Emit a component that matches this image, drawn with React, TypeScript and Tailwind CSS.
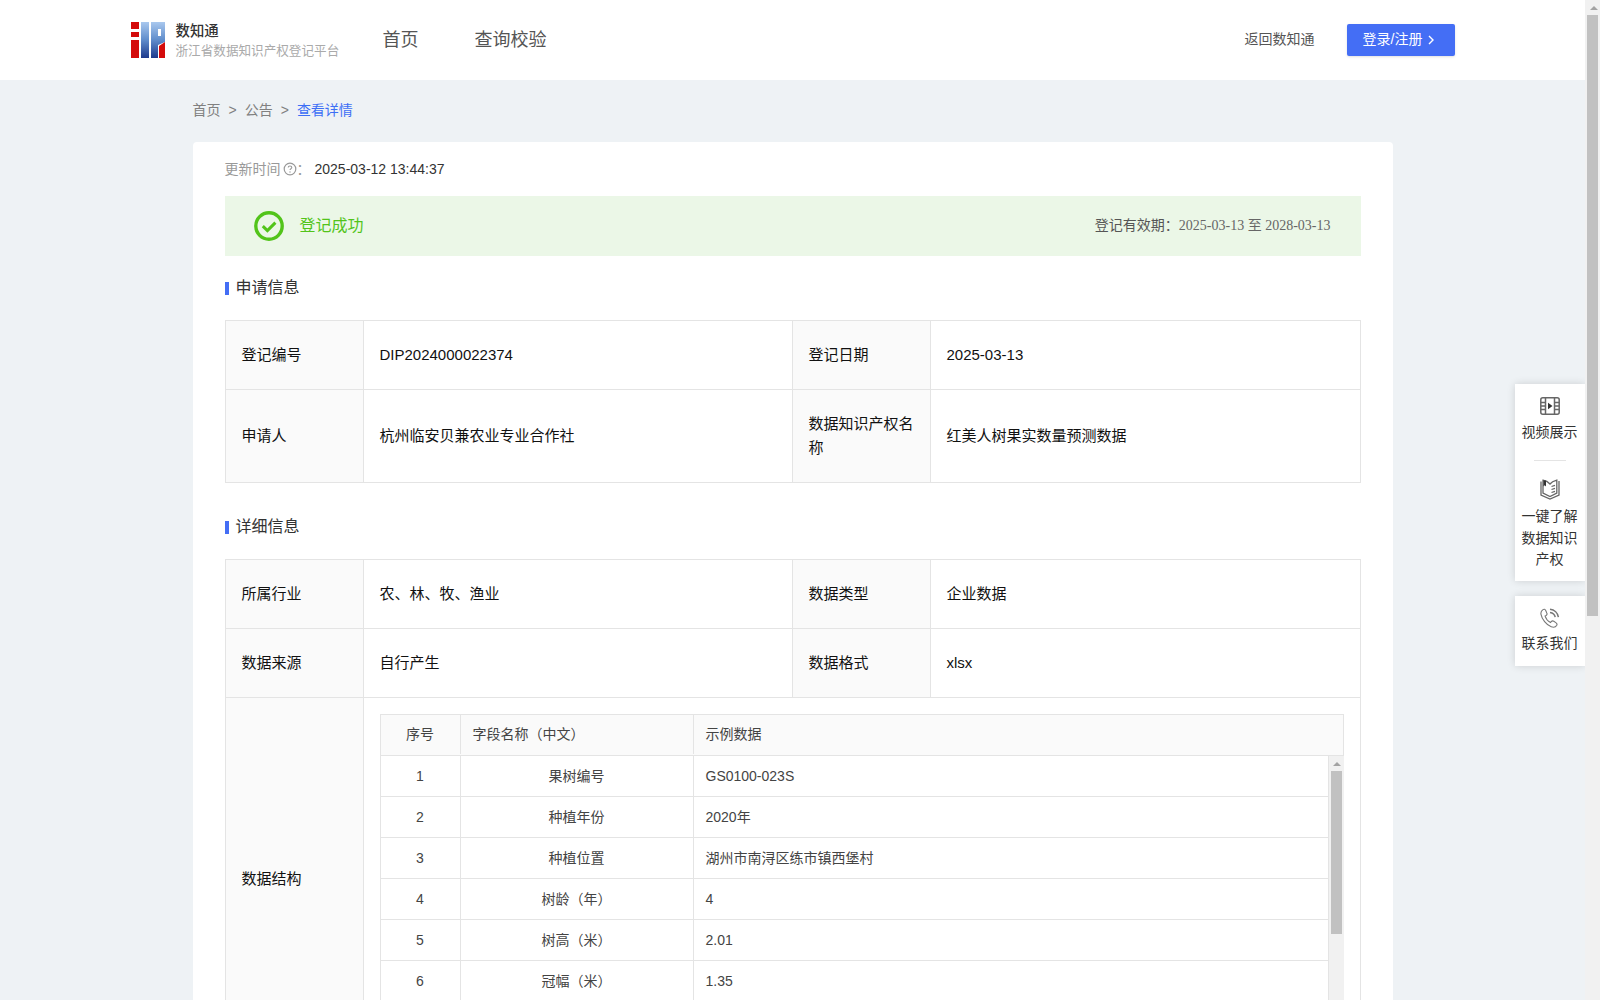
const basicRows = [
  { a: "登记编号", b: "DIP2024000022374", c: "登记日期", d: "2025-03-13", h: "h-[69px]" },
  { a: "申请人", b: "杭州临安贝兼农业专业合作社", c: "数据知识产权名称", d: "红美人树果实数量预测数据", h: "h-[93px]" },
];

const fieldRows = [
  ["1", "果树编号", "GS0100-023S"],
  ["2", "种植年份", "2020年"],
  ["3", "种植位置", "湖州市南浔区练市镇西堡村"],
  ["4", "树龄（年）", "4"],
  ["5", "树高（米）", "2.01"],
  ["6", "冠幅（米）", "1.35"],
];

function Logo() {
  return (
    <svg width="35" height="36" viewBox="0 0 35 36" className="shrink-0">
      <defs>
        <linearGradient id="logoBlue" x1="0" y1="0" x2="0" y2="1">
          <stop offset="0" stopColor="#a9c8ee" />
          <stop offset="0.5" stopColor="#5f8ccb" />
          <stop offset="1" stopColor="#1d3a8c" />
        </linearGradient>
      </defs>
      <rect x="0" y="0" width="8" height="7" fill="#d40b0b" />
      <rect x="0" y="10" width="8" height="5" fill="#d40b0b" />
      <rect x="0" y="18" width="8" height="18" fill="#d40b0b" />
      <rect x="10" y="0" width="8" height="36" fill="url(#logoBlue)" />
      <path d="M20 0H34V20L27 23V36H20Z" fill="url(#logoBlue)" />
      <rect x="27" y="7" width="3" height="7" fill="#ffffff" />
      <path d="M28 24L34 20V36H28Z" fill="#d40b0b" />
    </svg>
  );
}

function ScrollBar({ thumbHeight }: { thumbHeight: string }) {
  return (
    <div className="flex w-[15px] shrink-0 flex-col bg-[#f1f1f1]">
      <div className="flex h-[15px] items-center justify-center pl-[2px]">
        <div className="h-0 w-0 border-x-[4px] border-b-[4px] border-x-transparent border-b-[#a3a3a3]" />
      </div>
      <div className={`ml-[2px] w-[11px] bg-[#c1c1c1] ${thumbHeight}`} />
    </div>
  );
}

function SectionTitle({ children, className }: { children: React.ReactNode; className: string }) {
  return (
    <div className={`flex h-[22px] items-center gap-[7px] text-[16px] text-[#333] ${className}`}>
      <span className="h-[13px] w-[4px] bg-[#446ef5]" />
      {children}
    </div>
  );
}

function FieldTable() {
  return (
    <div className="border-l border-r border-t border-[#e4e4e4] text-[14px] text-[#444]">
      <div className="flex h-[41px] items-center border-b border-[#e4e4e4] bg-[#fafafa] pb-[1px]">
        <div className="flex h-full w-[80px] items-center justify-center border-r border-[#e4e4e4]">序号</div>
        <div className="flex h-full w-[233px] items-center border-r border-[#e4e4e4] pl-3">字段名称（中文）</div>
        <div className="pl-3">示例数据</div>
      </div>
      <div className="-mr-px flex h-[287px]">
        <div className="min-w-0 flex-1 border-r border-[#e4e4e4]">
          {fieldRows.map((row) => (
            <div key={row[0]} className="flex h-[41px] items-center border-b border-[#e4e4e4]">
              <div className="flex h-full w-[80px] items-center justify-center border-r border-[#e4e4e4]">{row[0]}</div>
              <div className="flex h-full w-[233px] items-center justify-center border-r border-[#e4e4e4]">{row[1]}</div>
              <div className="pl-3">{row[2]}</div>
            </div>
          ))}
        </div>
        <ScrollBar thumbHeight="h-[163px]" />
      </div>
    </div>
  );
}

export default function App() {
  const label = "border border-[#e4e4e4] bg-[#fafafa] px-4 text-[15px] leading-[24px] text-[#111]";
  const value = "border border-[#e4e4e4] px-4 text-[15px] leading-[24px] text-[#111]";

  return (
    <div className="flex h-screen w-full overflow-hidden [font-family:'Liberation_Sans','Noto_Sans_CJK_SC',sans-serif]">
      <div className="relative min-w-0 flex-1 overflow-hidden bg-[#eef2f5]">
        <header className="flex h-20 items-center justify-center bg-white">
          <div className="flex w-[1324px] items-center">
            <Logo />
            <div className="ml-[10px] w-[199px]">
              <div className="text-[14.4px] font-medium leading-[20px] text-[#333]">数知通</div>
              <div className="mt-[1px] text-[12.6px] leading-[18px] text-[#aaa]">浙江省数据知识产权登记平台</div>
            </div>
            <nav className="ml-[8px] flex gap-[56px] text-[18px] text-[#555]">
              <span>首页</span>
              <span>查询校验</span>
            </nav>
            <div className="ml-auto flex items-center gap-[32px]">
              <span className="-mt-[1px] text-[14px] text-[#555]">返回数知通</span>
              <button
                type="button"
                className="flex h-[32px] w-[108px] items-center justify-center gap-[6px] rounded-[2px] bg-[#446ef5] pb-[1px] pr-[3px] text-[14px] text-white shadow-sm"
              >
                登录/注册
                <svg width="7" height="10" viewBox="0 0 7 10" fill="none" stroke="currentColor" strokeWidth="1.4">
                  <path d="M1 1l4 4-4 4" />
                </svg>
              </button>
            </div>
          </div>
        </header>

        <main className="mx-auto w-[1200px]">
          <div className="flex h-[62px] items-start gap-[8px] pt-[20px] text-[14px] leading-[20px] text-[#808080]">
            <span>首页</span>
            <span>&gt;</span>
            <span>公告</span>
            <span>&gt;</span>
            <span className="text-[#3d6ff5]">查看详情</span>
          </div>

          <section className="rounded-t-[4px] bg-white px-8 pt-4">
            <div className="flex h-[22px] items-center text-[14px]">
              <span className="text-[#999]">更新时间</span>
              <svg width="14" height="14" viewBox="0 0 14 14" fill="none" className="ml-[2px] text-[#999]">
                <circle cx="7" cy="7" r="5.8" stroke="currentColor" strokeWidth="1.2" />
                <path d="M5.2 5.6c0-1 .8-1.6 1.8-1.6s1.8.6 1.8 1.5c0 1.2-1.8 1.3-1.8 2.6" stroke="currentColor" strokeWidth="1.1" />
                <circle cx="7" cy="10" r=".7" fill="currentColor" />
              </svg>
              <span className="w-[18px] text-[#999]">：</span>
              <span className="text-[#333]">2025-03-12 13:44:37</span>
            </div>

            <div className="mt-4 flex h-[60px] items-center bg-[#ebf7e7] pl-[29px] pr-[30px]">
              <svg width="30" height="30" viewBox="0 0 30 30" fill="none" stroke="#52c41a">
                <circle cx="15" cy="15" r="13.2" strokeWidth="3.4" />
                <path d="M8.8 15.2l4.6 4.4 8-8" strokeWidth="3" />
              </svg>
              <span className="ml-[16px] pb-[1px] text-[16px] text-[#52c41a]">登记成功</span>
              <span className="ml-auto pb-[2px] text-[14px] text-[#555]">
                登记有效期：
                <span className="[font-family:'Liberation_Serif','Noto_Sans_CJK_SC',serif] text-[#666]">
                  2025-03-13 至 2028-03-13
                </span>
              </span>
            </div>

            <SectionTitle className="mt-[21px]">申请信息</SectionTitle>
            <table className="mt-[21px] w-full table-fixed border-collapse">
              <colgroup>
                <col className="w-[138px]" />
                <col className="w-[429px]" />
                <col className="w-[138px]" />
                <col />
              </colgroup>
              <tbody>
                {basicRows.map((row) => (
                  <tr key={row.a} className={row.h}>
                    <td className={label}>{row.a}</td>
                    <td className={value}>{row.b}</td>
                    <td className={label}>{row.c}</td>
                    <td className={value}>{row.d}</td>
                  </tr>
                ))}
              </tbody>
            </table>

            <SectionTitle className="mt-[33px]">详细信息</SectionTitle>
            <table className="mt-[21px] w-full table-fixed border-collapse">
              <colgroup>
                <col className="w-[138px]" />
                <col className="w-[429px]" />
                <col className="w-[138px]" />
                <col />
              </colgroup>
              <tbody>
                <tr className="h-[69px]">
                  <td className={label}>所属行业</td>
                  <td className={value}>农、林、牧、渔业</td>
                  <td className={label}>数据类型</td>
                  <td className={value}>企业数据</td>
                </tr>
                <tr className="h-[69px]">
                  <td className={label}>数据来源</td>
                  <td className={value}>自行产生</td>
                  <td className={label}>数据格式</td>
                  <td className={value}>xlsx</td>
                </tr>
                <tr>
                  <td className={label}>数据结构</td>
                  <td colSpan={3} className="border border-[#e4e4e4] p-4">
                    <FieldTable />
                  </td>
                </tr>
              </tbody>
            </table>
          </section>
        </main>

        {/* floating side tools */}
        <aside className="absolute right-0 top-[384px] flex w-[70px] flex-col gap-[15px] text-center text-[14px] text-[#333]">
          <div className="bg-white pt-[13px] shadow-[0_0_8px_rgba(0,0,0,0.14)]">
            <svg width="20" height="18" viewBox="0 0 20 18" fill="none" stroke="#666" strokeWidth="1.5" className="mx-auto">
              <rect x=".8" y=".8" width="18.4" height="16.4" rx="2" />
              <path d="M5.5 1v16M14.5 1v16M1 5.5h4.5M1 9h4.5M1 12.5h4.5M14.5 5.5H19M14.5 9H19M14.5 12.5H19" />
              <path d="M8 5.8l4.5 3.2L8 12.2Z" fill="#333" stroke="none" />
            </svg>
            <div className="mt-[6px] pr-[1px] leading-[22px]">视频展示</div>
            <div className="mx-auto mt-[17px] h-px w-[32px] bg-[#e4e4e4]" />
            <svg width="20" height="21" viewBox="0 0 20 21" fill="none" stroke="#666" strokeWidth="1.3" className="mx-auto mt-[18px]">
              <path d="M1 2.5V16l9 4 9-4V2" />
              <path d="M10 5C8 2.8 5.5 1.6 3 1.2V14l7 3.5 6.8-3.5V1.2C14 2 11.6 3 10 5Z" />
              <path d="M3.4 1.5h2.6v6L4.7 6.2 3.4 7.5Z" fill="#333" stroke="none" />
              <path d="M11.5 7.5l3.5-1.2M11.5 10.5l3.5-1.2M11.5 13.5l3.5-1.2" />
            </svg>
            <div className="mt-[6px] pb-[10px] pl-[6px] pr-[7px] leading-[21.5px]">一键了解数据知识产权</div>
          </div>
          <div className="h-[70px] bg-white pt-[12px] shadow-[0_0_8px_rgba(0,0,0,0.14)]">
            <svg width="20" height="20" viewBox="0 0 20 20" fill="none" stroke="#777" strokeWidth="1.1" className="mx-auto">
              <path d="M3 1.6C1.4 2.6.6 4.4 1 6.4c.8 4.6 5.4 10.6 10.2 12.4 2 .7 4.6.2 5.6-1.6.5-1-.1-2-1-2.6l-2-1.3c-.9-.6-1.9-.4-2.6.4l-.7.8c-2.4-1.2-4.6-3.8-5.4-6.4l1-.6c.9-.6 1.2-1.6.7-2.6L5.6 2.2C5 1.2 4 1 3 1.6Z" />
              <path d="M10 1.2c4.4.4 7.8 3.6 8.4 8M10 4.4c2.6.3 4.8 2.3 5.2 4.8" strokeWidth="1.5" />
            </svg>
            <div className="mt-[4px] pr-[1px] leading-[22px]">联系我们</div>
          </div>
        </aside>
      </div>

      <ScrollBar thumbHeight="h-[601px]" />
    </div>
  );
}
